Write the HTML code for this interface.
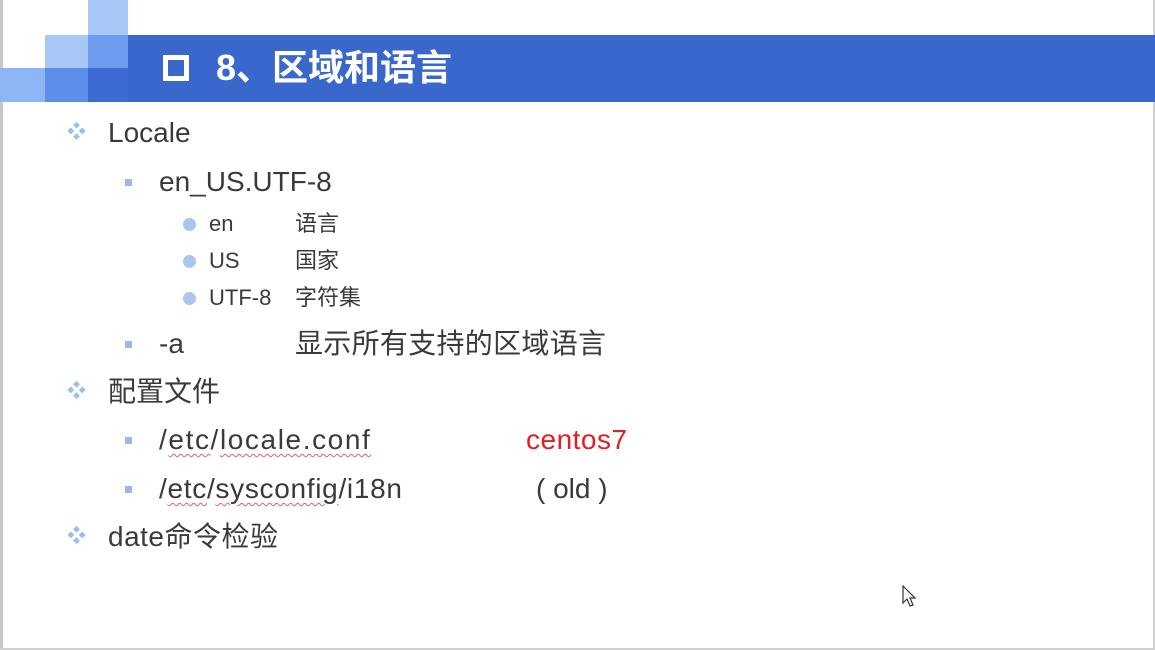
<!DOCTYPE html><html><head><meta charset="utf-8"><style>
body{margin:0;width:1155px;height:650px;background:#fff;position:relative;overflow:hidden;font-family:"Liberation Sans","Noto Sans CJK SC",sans-serif;color:#3a3a3a}
div{position:absolute;white-space:nowrap}
.t{line-height:32px;font-size:28px}
.s{line-height:24px;font-size:22px}
.d{color:#9cc0ec;font-size:19px;line-height:32px}
.sq{width:7px;height:7px;background:#9ab8e8}
.c{width:13px;height:13px;border-radius:50%;background:#a9c6ee}
.u{text-decoration:underline wavy #e06060;text-decoration-thickness:1px;text-underline-offset:4px}
</style></head><body>
<div style="left:0;top:0;width:3px;height:650px;background:#c8c8c8"></div>
<div style="right:0;top:0;width:2px;height:650px;background:#d0d0d0"></div>
<div style="left:0;bottom:0;width:1155px;height:2px;background:#d0d0d0"></div>
<div style="left:88px;top:0;width:40px;height:35px;background:#a7c7f7"></div>
<div style="left:45px;top:35px;width:43px;height:33px;background:#a7c7f7"></div>
<div style="left:88px;top:35px;width:40px;height:33px;background:#6d9cef"></div>
<div style="left:0;top:68px;width:45px;height:34px;background:#8db6f5"></div>
<div style="left:45px;top:68px;width:43px;height:34px;background:#5c8deb"></div>
<div style="left:88px;top:68px;width:40px;height:34px;background:#3d6bd2"></div>
<div style="left:128px;top:35px;width:1027px;height:67px;background:#3a67cc"></div>
<div style="left:163px;top:55px;width:26px;height:26px;border:5px solid #fff;box-sizing:border-box;"></div>
<div style="left:216px;top:45px;font-size:36px;line-height:46px;font-weight:bold;color:#fff">8、区域和语言</div>

<div class="d" style="left:67px;top:117px">❖</div><div class="t" style="left:108px;top:117px">Locale</div>
<div class="sq" style="left:125px;top:179px"></div><div class="t" style="left:159px;top:166px">en_US.UTF-8</div>
<div class="c" style="left:183px;top:218px"></div><div class="s" style="left:209px;top:212px">en</div><div class="s" style="left:295px;top:212px">语言</div>
<div class="c" style="left:183px;top:255px"></div><div class="s" style="left:209px;top:249px">US</div><div class="s" style="left:295px;top:249px">国家</div>
<div class="c" style="left:183px;top:292px"></div><div class="s" style="left:209px;top:286px">UTF-8</div><div class="s" style="left:295px;top:286px">字符集</div>
<div class="sq" style="left:125px;top:341px"></div><div class="t" style="left:159px;top:328px">-a</div><div class="t" style="left:295px;top:328px;letter-spacing:0.3px">显示所有支持的区域语言</div>
<div class="d" style="left:67px;top:376px">❖</div><div class="t" style="left:108px;top:376px">配置文件</div>
<div class="sq" style="left:125px;top:437px"></div><div class="t" style="left:159px;top:424px;letter-spacing:1.6px">/<span class="u">etc</span>/<span class="u">locale.conf</span></div><div class="t" style="left:526px;top:424px;color:#e02020;letter-spacing:0.5px">centos7</div>
<div class="sq" style="left:125px;top:486px"></div><div class="t" style="left:159px;top:473px;letter-spacing:0.7px">/<span class="u">etc</span>/<span class="u">sysconfig</span>/i18n</div><div class="t" style="left:536px;top:473px">( old )</div>
<div class="d" style="left:67px;top:521px">❖</div><div class="t" style="left:108px;top:521px;letter-spacing:0.5px">date命令检验</div>
<svg style="position:absolute;left:902px;top:585px" width="18" height="24" viewBox="0 0 18 24"><path d="M1 1 L1 18 L5 14 L8 21 L11 20 L8 13 L13 13 Z" fill="#fff" stroke="#333" stroke-width="1.2"/></svg>
</body></html>
